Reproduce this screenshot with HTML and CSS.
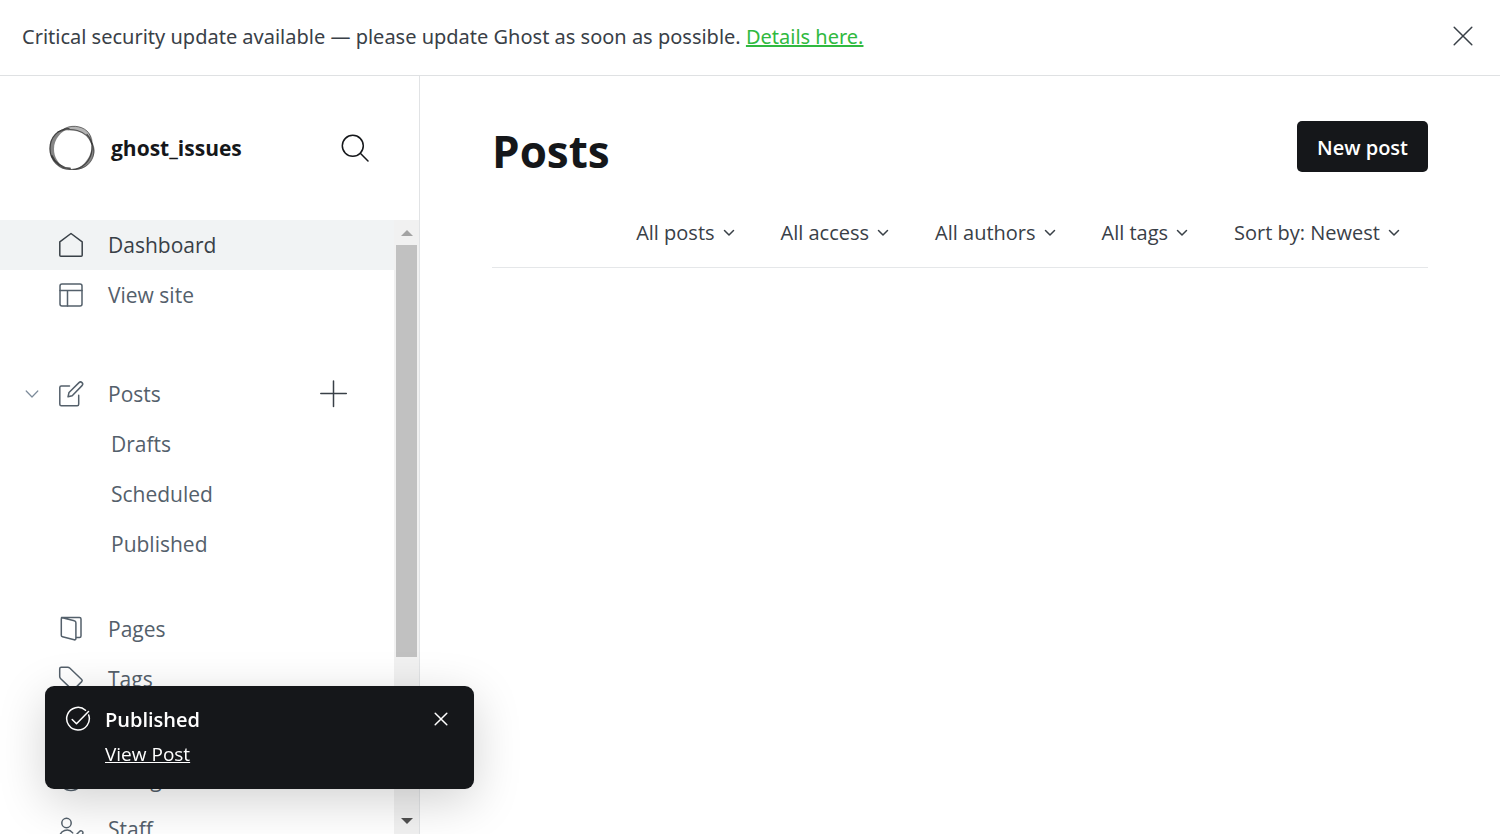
FILE: index.html
```html
<!DOCTYPE html>
<html lang="en">
<head>
<meta charset="utf-8">
<meta name="viewport" content="width=device-width, initial-scale=1">
<title>Posts - ghost_issues</title>
<link rel="stylesheet" href="styles.css">
</head>
<body>
<div class="app">
  <div class="alert">
    <p class="alert-text">Critical security update available — please update Ghost as soon as possible. <a href="#details">Details here.</a></p>
    <button class="icon-button" type="button" aria-label="Dismiss alert">
      <svg width="20" height="20" viewBox="0 0 20 20"><path d="M1.200 1.200l17.600 17.600M18.800 1.200L1.200 18.800"/></svg>
    </button>
  </div>
  <div class="viewport">
    <aside class="sidebar">
      <header class="site">
        <svg class="logo" width="46" height="46" viewBox="0 0 46 46">
          <g stroke="none" fill="#444" fill-rule="evenodd">
            <path opacity=".65" d="M.5 24C.5 11 9 3 21 3c-9 3-16 11-16 21 0 8 4 14 10 18C6 39 .5 33 .5 24z"/>
            <path opacity=".4" d="M15 4C22-1 33 0 39 7c4 4 5 8 5 14-3-9-9-14-18-15-5 0-8-1-11-2z"/>
            <path opacity=".65" d="M43 17c4 6 3 13-1 19-4 6-10 9-18 9 9-3 15-9 17.500-17 1-4 1.500-7 1.500-11z"/>
          </g>
          <g stroke="#2c2c2c">
            <path d="M20 3.500C9 4 1 12 1 23.500c0 12 9 21 21 21 12 0 20-9 21-20 .5-6-1-11-5-15" stroke-width="1.200" opacity=".75"/>
            <path d="M14 4.500C21-.5 32 .5 38 6c4 4 4 8 5 13 3 7 2 12-1 17-4 6-10 8.500-18 8.500" stroke-width="1" opacity=".6"/>
            <path d="M9 7c12-5 28-3 34 12" stroke-width="1.200" opacity=".7"/>
            <path d="M3 31c3 7 10 12 18 12.500" stroke-width="1.800" opacity=".8"/>
          </g>
        </svg>
        <strong class="site-name">ghost_issues</strong>
        <button class="icon-button search" type="button" aria-label="Search">
          <svg width="28" height="28" viewBox="0 0 28 28"><circle cx="11.800" cy="11.800" r="10.500"/><path d="M19.300 19.300l7.700 7.700"/></svg>
        </button>
      </header>
      <div class="scroller">
        <nav class="menu">
          <ul>
            <li class="row active"><a href="#dashboard">
              <svg width="26" height="26" viewBox="0 0 26 26"><path d="M1.800 9.800L13 1.500l11.200 8.300v13.400a1 1 0 0 1-1 1H2.800a1 1 0 0 1-1-1z"/></svg>Dashboard</a></li>
            <li class="row"><a href="#site">
              <svg width="26" height="26" viewBox="0 0 26 26"><rect x="2" y="2" width="22" height="22" rx="2"/><path d="M2 8.500h22M9.500 8.500V24"/></svg>View site</a></li>
          </ul>
          <ul>
            <li class="row expandable">
              <button class="toggle" type="button" aria-label="Collapse posts"><svg width="14" height="10" viewBox="0 0 14 10"><path d="M1.200 2L7 8l5.800-6" stroke-width="1.200"/></svg></button>
              <a href="#posts">
              <svg width="26" height="26" viewBox="0 0 26 26"><path d="M11.500 5H3.300a1.500 1.500 0 0 0-1.500 1.500v16.700a1.500 1.500 0 0 0 1.500 1.500h15.900a1.500 1.500 0 0 0 1.500-1.500v-9M10 15.800l1-4.300L21 1.600a2 2 0 0 1 3 3L14.200 14.700z"/></svg>Posts</a>
              <button class="icon-button" type="button" aria-label="New post"><svg width="28" height="28" viewBox="0 0 28 28"><path d="M13.500 1v25.500M.8 13.500h25.500"/></svg></button>
            </li>
            <li class="row child"><a href="#drafts">Drafts</a></li>
            <li class="row child"><a href="#scheduled">Scheduled</a></li>
            <li class="row child"><a href="#published">Published</a></li>
          </ul>
          <ul>
            <li class="row"><a href="#pages">
              <svg width="26" height="26" viewBox="0 0 26 26"><path d="M3.500 1.500H21.500a1.500 1.500 0 0 1 1.500 1.500v17a1.500 1.500 0 0 1-1.500 1.500H18M4.300 1.700l12 3.100a2 2 0 0 1 1.600 2V22.500a1.300 1.300 0 0 1-1.700 1.300L4.500 20.700a1.500 1.500 0 0 1-1.200-1.500V2.700a1 1 0 0 1 1-1z"/></svg>Pages</a></li>
            <li class="row"><a href="#tags">
              <svg width="26" height="26" viewBox="0 0 26 26"><path d="M1.700 2.700a1.500 1.500 0 0 1 1.500-1.500h6.500a3 3 0 0 1 2 .8l12 11.500a1.500 1.500 0 0 1 0 2.100l-7.800 7.800a1.500 1.500 0 0 1-2.100 0L2.500 12.500a3 3 0 0 1-.8-2z"/></svg>Tags</a></li>
            <li class="row"><a href="#members">
              <svg width="26" height="26" viewBox="0 0 26 26"><circle cx="9" cy="9" r="4"/><path d="M2 22a7 7 0 0 1 14 0zM17 6a4 4 0 0 1 0 8M20 16a6 6 0 0 1 4 6"/></svg>Members</a></li>
            <li class="row"><a href="#design">
              <svg width="26" height="26" viewBox="0 0 26 26"><circle cx="13" cy="13" r="11.500"/><circle cx="13" cy="13" r="4"/></svg>Design</a></li>
            <li class="row"><a href="#staff">
              <svg width="26" height="26" viewBox="0 0 26 26"><circle cx="8.500" cy="7" r="4.700"/><path d="M1.700 24v-2.500a7.300 7.300 0 0 1 13-4.600M14.500 25.500l1-4 6-6a1.500 1.500 0 0 1 3 2.500l-6.300 6.500z"/></svg>Staff</a></li>
          </ul>
        </nav>
        <div class="scrollbar" aria-hidden="true">
          <svg class="arrow up" width="12" height="6" viewBox="0 0 12 6"><path d="M0 6L6 0l6 6z"/></svg>
          <div class="track"><div class="thumb"></div></div>
          <svg class="arrow down" width="12" height="6" viewBox="0 0 12 6"><path d="M0 0l6 6 6-6z"/></svg>
        </div>
      </div>
    </aside>
    <main class="main">
      <header class="page-head">
        <h1>Posts</h1>
        <button class="new-post" type="button">New post</button>
      </header>
      <div class="filters">
        <button type="button">All posts<svg width="12" height="8" viewBox="0 0 12 8"><path d="M1.500 1.500L6 6l4.500-4.500"/></svg></button>
        <button type="button">All access<svg width="12" height="8" viewBox="0 0 12 8"><path d="M1.500 1.500L6 6l4.500-4.500"/></svg></button>
        <button type="button">All authors<svg width="12" height="8" viewBox="0 0 12 8"><path d="M1.500 1.500L6 6l4.500-4.500"/></svg></button>
        <button type="button">All tags<svg width="12" height="8" viewBox="0 0 12 8"><path d="M1.500 1.500L6 6l4.500-4.500"/></svg></button>
        <button type="button">Sort by: Newest<svg width="12" height="8" viewBox="0 0 12 8"><path d="M1.500 1.500L6 6l4.500-4.500"/></svg></button>
      </div>
    </main>
  </div>
</div>
<div class="toast" role="status">
  <svg width="26" height="26" viewBox="0 0 26 26"><path d="M20.500 4.200A11.300 11.300 0 1 0 23.700 9M7.200 13.500l4.300 4.300L23.500 5.500"/></svg>
  <div class="toast-body">
    <strong>Published</strong>
    <a href="#view">View Post</a>
  </div>
  <button class="icon-button" type="button" aria-label="Close"><svg width="14" height="14" viewBox="0 0 14 14"><path d="M1.200 1.200l11.600 11.600M12.800 1.200L1.200 12.800"/></svg></button>
</div>
</body>
</html>
```
FILE: styles.css
```css
* {
  box-sizing: border-box;
}

body {
  margin: 0;
  background: #fff;
  color: #15171a;
  font-family: "Open Sans", "Noto Sans", sans-serif;
  font-size: 20px;
}

svg {
  display: block;
  flex: none;
  fill: none;
  stroke: currentColor;
  stroke-width: 1.5;
  stroke-linecap: round;
  stroke-linejoin: round;
}

button {
  margin: 0;
  padding: 0;
  border: 0;
  background: none;
  color: inherit;
  font: inherit;
  cursor: pointer;
}

.app {
  display: flex;
  flex-direction: column;
  height: 100vh;
  overflow: hidden;
}

.alert {
  display: flex;
  align-items: flex-start;
  justify-content: space-between;
  padding: 23px 27px 24px 22px;
  border-bottom: 1px solid #dfe1e3;
  color: #394047;
}

.alert .icon-button {
  padding-top: 3px;
}

.alert-text {
  margin: 0;
  font-family: "Noto Sans", "Open Sans", sans-serif;
  line-height: 28px;
}

.alert a {
  color: #30b940;
  text-decoration: underline;
  text-decoration-thickness: 2px;
}

.viewport {
  display: flex;
  flex: 1;
  min-height: 0;
}

.sidebar {
  display: flex;
  flex-direction: column;
  flex: 0 0 420px;
  border-right: 1px solid #e1e3e5;
}

.site {
  display: flex;
  align-items: center;
  gap: 16px;
  padding: 48px 50px 48px 49px;
}

.site-name {
  font-size: 21px;
  line-height: 48px;
}

.search {
  margin-left: auto;
}

.scroller {
  display: flex;
  flex: 1;
  min-height: 0;
}

.menu {
  flex: 1;
  overflow: hidden;
  color: #54606b;
  font-size: 21px;
}

.menu ul {
  margin: 0 0 49px;
  padding: 0;
  list-style: none;
}

.menu ul:nth-child(2) {
  margin-bottom: 35px;
}

.row {
  display: flex;
  align-items: center;
  height: 50px;
  padding: 0 46px 0 58px;
}

.row a {
  display: flex;
  flex: 1;
  align-items: center;
  gap: 24px;
  color: inherit;
  text-decoration: none;
}

.row.active {
  background: #f1f3f4;
  color: #394047;
}

.row.expandable {
  padding-left: 25px;
}

.row.child {
  padding-left: 111px;
}

.toggle {
  width: 33px;
  color: #7c8b9a;
}

.row .icon-button {
  color: #394047;
}

.scrollbar {
  display: flex;
  flex-direction: column;
  align-items: center;
  width: 25px;
  padding: 10px 0;
  background: #f1f1f1;
}

.arrow {
  stroke: none;
  fill: #a3a3a3;
}

.arrow.down {
  fill: #505050;
}

.track {
  flex: 1;
  width: 21px;
  margin: 9px 0;
}

.thumb {
  height: 73%;
  background: #c1c1c1;
}

.main {
  flex: 1;
  padding: 45px 72px;
}

.page-head {
  display: flex;
  align-items: center;
  justify-content: space-between;
}

h1 {
  margin: 0;
  font-size: 44px;
  line-height: 60px;
}

.new-post {
  align-self: flex-start;
  padding: 2px 20px 0;
  border-radius: 5px;
  background: #15171a;
  color: #fff;
  font-size: 20px;
  font-weight: 600;
  line-height: 49px;
}

.filters {
  display: flex;
  justify-content: flex-end;
  gap: 46px;
  padding: 38px 28px 20px 0;
  border-bottom: 1px solid #e5e7e9;
  color: #394047;
  font-size: 20px;
  line-height: 28px;
}

.filters button {
  display: flex;
  align-items: center;
  gap: 8px;
}

.toast {
  position: fixed;
  bottom: 45px;
  left: 45px;
  display: flex;
  align-items: flex-start;
  gap: 14px;
  width: 429px;
  padding: 20px 26px 21px 20px;
  border-radius: 9px;
  background: #15171a;
  box-shadow: 0 0 2px rgba(0, 0, 0, .06), 0 12px 48px rgba(0, 0, 0, .18);
  color: #fff;
}

.toast-body {
  display: flex;
  flex: 1;
  flex-direction: column;
  align-items: flex-start;
  gap: 6px;
  line-height: 28px;
}

.toast strong {
  font-weight: 600;
}

.toast a {
  color: inherit;
  font-size: 19px;
}

.toast .icon-button {
  margin-top: 6px;
}
```
